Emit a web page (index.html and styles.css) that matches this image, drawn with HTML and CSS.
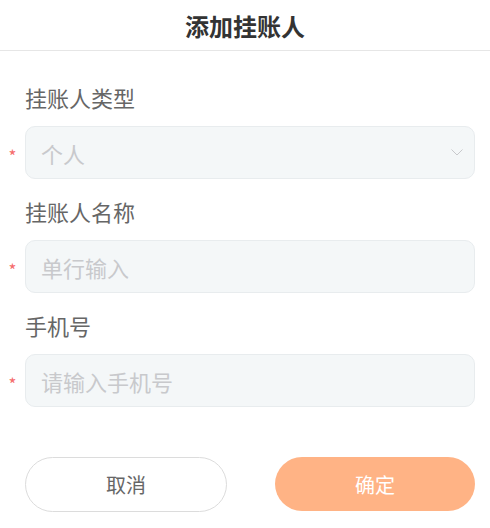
FILE: index.html
```html
<!DOCTYPE html>
<html lang="zh-CN">
<head>
    <meta charset="UTF-8">
    <meta name="viewport" content="width=device-width, initial-scale=1.0">
    <title>添加挂账人</title>
    <link rel="stylesheet" href="styles.css">
</head>
<body>

    <!-- 标题 -->
    <div class="header">添加挂账人</div>

    <div class="form">
        <div class="form-item">
            <label class="form-label">挂账人类型</label>
            <div class="form-row">
                <span class="required">*</span>
                <div class="field field-select">
                    <span class="placeholder">个人</span>
                    <svg class="arrow" width="12" height="7" viewBox="0 0 12 7">
                        <path d="M0.5 0.5 L6 6 L11.5 0.5" fill="none" stroke="#c8c9cc" stroke-width="1"/>
                    </svg>
                </div>
            </div>
        </div>

        <div class="form-item">
            <label class="form-label" for="nombre">挂账人名称</label>
            <div class="form-row">
                <span class="required">*</span>
                <input class="field" id="nombre" type="text" placeholder="单行输入">
            </div>
        </div>

        <div class="form-item">
            <label class="form-label" for="telefono">手机号</label>
            <div class="form-row">
                <span class="required">*</span>
                <input class="field" id="telefono" type="text" placeholder="请输入手机号">
            </div>
        </div>
    </div>

    <div class="button-group">
        <button class="btn btn-cancel">取消</button>
        <button class="btn btn-confirm">确定</button>
    </div>

</body>
</html>
```

FILE: styles.css
```css
:root {
    --primary-color: #ffb385;
    --text-color: #333;
    --label-color: #666;
    --placeholder-color: #c8c9cc;
    --field-bg: #f4f7f8;
    --field-border: #e8ecee;
}

* {
    box-sizing: border-box;
    margin: 0;
    padding: 0;
}

body {
    font-family: "Noto Sans CJK SC", "Noto Sans", sans-serif;
    color: var(--text-color);
    background: #fff;
    width: 490px;
}

.header {
    height: 51px;
    line-height: 52px;
    text-align: center;
    font-size: 24px;
    font-weight: 700;
    color: #333;
    border-bottom: 1px solid #e6e6e6;
}

.form {
    padding-top: 32px;
}

.form-item {
    margin-bottom: 18px;
}

.form-label {
    display: block;
    padding-left: 25px;
    height: 28px;
    line-height: 28px;
    font-size: 22px;
    color: var(--label-color);
    margin-bottom: 15px;
}

.form-row {
    display: flex;
    align-items: center;
    padding-right: 15px;
}

.required {
    width: 25px;
    text-align: center;
    color: #f56c6c;
    font-size: 17px;
    line-height: 1;
    padding-top: 5px;
}

.field {
    flex: 1;
    height: 53px;
    padding: 0 15px;
    background-color: var(--field-bg);
    border: 1px solid var(--field-border);
    border-radius: 10px;
    font-family: inherit;
    font-size: 22px;
    color: var(--text-color);
    outline: none;
}

.field::placeholder {
    color: var(--placeholder-color);
}

.field-select {
    display: flex;
    align-items: center;
    justify-content: space-between;
    padding-right: 11px;
}

.placeholder {
    color: var(--placeholder-color);
}

.button-group {
    display: flex;
    justify-content: space-between;
    padding: 32px 15px 0 25px;
}

.btn {
    height: 55px;
    border-radius: 28px;
    font-family: inherit;
    font-size: 20px;
    cursor: pointer;
}

.btn-cancel {
    width: 202px;
    background: #fff;
    color: var(--label-color);
    border: 1px solid #dcdcdc;
}

.btn-confirm {
    width: 200px;
    height: 54px;
    background: var(--primary-color);
    color: #fff;
    border: none;
}
```
